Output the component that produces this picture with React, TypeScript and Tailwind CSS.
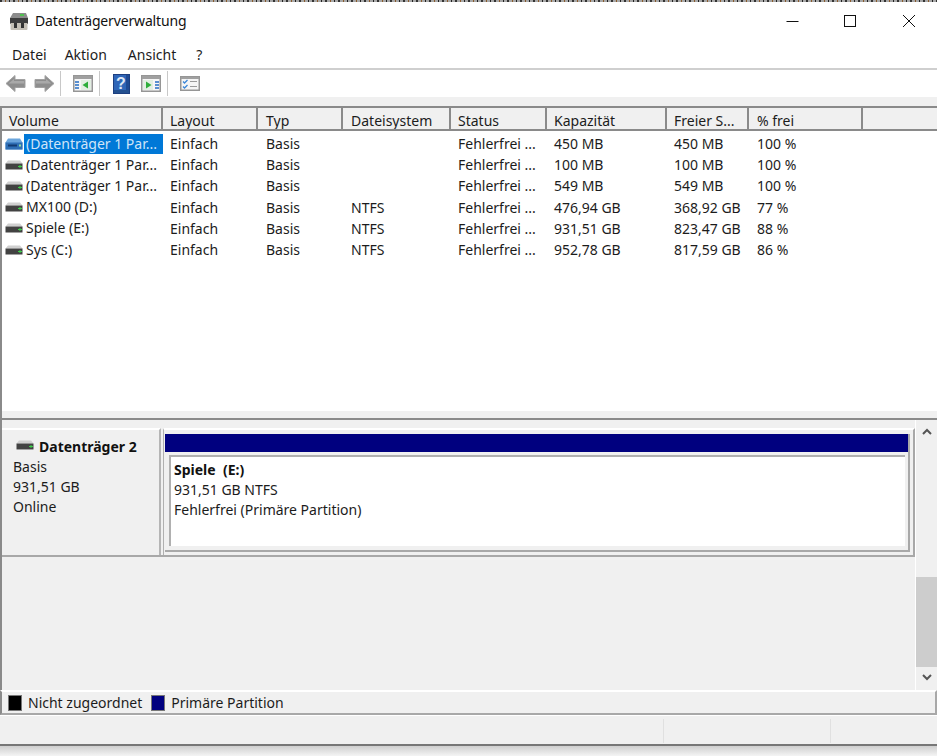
import React from "react";

const FONT = "font-['Noto_Sans','Open_Sans',sans-serif]";

const columns = [
  { label: "Volume", w: "w-[161px]", pad: "pl-[7px]" },
  { label: "Layout", w: "w-[95px]", pad: "pl-[7px]" },
  { label: "Typ", w: "w-[85px]", pad: "pl-[8px]" },
  { label: "Dateisystem", w: "w-[108px]", pad: "pl-[8px]" },
  { label: "Status", w: "w-[96px]", pad: "pl-[7px]" },
  { label: "Kapazität", w: "w-[120px]", pad: "pl-[7px]" },
  { label: "Freier S...", w: "w-[82px]", pad: "pl-[7px]" },
  { label: "% frei", w: "w-[114px]", pad: "pl-[8px]" },
];

const rows = [
  ["(Datenträger 1 Par...", "Einfach", "Basis", "", "Fehlerfrei ...", "450 MB", "450 MB", "100 %"],
  ["(Datenträger 1 Par...", "Einfach", "Basis", "", "Fehlerfrei ...", "100 MB", "100 MB", "100 %"],
  ["(Datenträger 1 Par...", "Einfach", "Basis", "", "Fehlerfrei ...", "549 MB", "549 MB", "100 %"],
  ["MX100 (D:)", "Einfach", "Basis", "NTFS", "Fehlerfrei ...", "476,94 GB", "368,92 GB", "77 %"],
  ["Spiele (E:)", "Einfach", "Basis", "NTFS", "Fehlerfrei ...", "931,51 GB", "823,47 GB", "88 %"],
  ["Sys (C:)", "Einfach", "Basis", "NTFS", "Fehlerfrei ...", "952,78 GB", "817,59 GB", "86 %"],
];

function DiskIcon({ selected = false }: { selected?: boolean }) {
  if (selected) {
    return (
      <svg width="18" height="12" viewBox="0 0 18 12" className="shrink-0">
        <path d="M3 0.5h12l2.5 4v7H0.5v-7z" fill="#6aa5dc" />
        <rect x="0.5" y="4.5" width="17" height="7" fill="#2f6fb5" />
        <rect x="3" y="6.5" width="9" height="2" fill="#123a70" />
        <rect x="14" y="6.5" width="2" height="2" fill="#8fe0a0" />
      </svg>
    );
  }
  return (
    <svg width="18" height="12" viewBox="0 0 18 12" className="shrink-0">
      <path d="M3 1.5h12l2.5 3H0.5z" fill="#d0d0d0" />
      <rect x="0.5" y="4.5" width="17" height="5.5" fill="#424242" />
      <rect x="0.5" y="10" width="17" height="1" fill="#a0a0a0" />
      <rect x="13" y="7" width="4" height="1" fill="#3ed04a" />
      <rect x="14.5" y="6" width="1" height="3" fill="#3ed04a" />
    </svg>
  );
}

function AppIcon() {
  return (
    <svg width="20" height="20" viewBox="0 0 20 20" className="shrink-0">
      <path d="M4 2h13l2 5H1z" fill="#8c8c8c" />
      <rect x="11" y="3" width="4" height="2" fill="#4fc04f" />
      <path d="M1 7h18v6H1z" fill="#3d3d3d" />
      <path d="M1.5 12h17v6a1 1 0 0 1-1 1h-15a1 1 0 0 1-1-1z" fill="#c4bfb5" />
      <rect x="5" y="12" width="3" height="5" fill="#333" />
      <rect x="12" y="12" width="3" height="5" fill="#333" />
    </svg>
  );
}

function Arrow({ flip = false }: { flip?: boolean }) {
  return (
    <svg width="21" height="19" viewBox="0 0 21 19" className={flip ? "-scale-x-100" : ""}>
      <path d="M1 9.5 L10 1.5 V5.5 H20 V13.5 H10 V17.5 Z" fill="#8e8e8e" stroke="#a2a2a2" strokeWidth="1" />
      <path d="M3.5 9.5 L9 5 V7 H19 V9.5 Z" fill="#a9a9a9" />
    </svg>
  );
}

function PaneIcon({ right = false }: { right?: boolean }) {
  return (
    <svg width="20" height="17" viewBox="0 0 20 17">
      <rect x="0.75" y="0.75" width="18.5" height="15.5" fill="#f6f6f6" stroke="#969696" strokeWidth="1.5" />
      <rect x="1" y="1" width="18" height="3" fill="#a0a0a0" />
      {right ? (
        <>
          <rect x="2" y="5" width="10" height="10" fill="#e2efe2" />
          <path d="M5 6.5 L10.5 10 L5 13.5 Z" fill="#2dae3a" />
          <rect x="14" y="6" width="4" height="2" fill="#5a8fd0" />
          <rect x="14" y="9" width="4" height="2" fill="#5a8fd0" />
          <rect x="14" y="12" width="4" height="2" fill="#5a8fd0" />
        </>
      ) : (
        <>
          <rect x="2" y="6" width="4" height="2" fill="#5a8fd0" />
          <rect x="2" y="9" width="4" height="2" fill="#5a8fd0" />
          <rect x="2" y="12" width="4" height="2" fill="#5a8fd0" />
          <rect x="8" y="5" width="10" height="10" fill="#e2efe2" />
          <path d="M15 6.5 L9.5 10 L15 13.5 Z" fill="#2dae3a" />
        </>
      )}
    </svg>
  );
}

function HelpIcon() {
  return (
    <svg width="17" height="20" viewBox="0 0 17 20">
      <rect x="0.5" y="0.5" width="16" height="19" fill="#2f66b8" stroke="#1d3f80" />
      <rect x="13" y="1" width="3" height="18" fill="#1f4a94" />
      <rect x="1" y="16" width="15" height="3" fill="#24508f" />
      <text x="8" y="15" textAnchor="middle" fontSize="16" fontWeight="700" fontFamily="Liberation Sans" fill="#dfe8f6">?</text>
    </svg>
  );
}

function CheckIcon() {
  return (
    <svg width="20" height="15" viewBox="0 0 20 15">
      <rect x="0.75" y="0.75" width="18.5" height="13.5" fill="#f5f5f5" stroke="#969696" strokeWidth="1.5" />
      <rect x="1" y="1" width="18" height="2" fill="#a0a0a0" />
      <path d="M3 5.5l1.5 1.5L7.5 4M3 10.5l1.5 1.5 3-3" fill="none" stroke="#3a86d8" strokeWidth="1.3" />
      <rect x="10" y="5" width="7" height="1" fill="#9a9a9a" />
      <rect x="10" y="10" width="7" height="1" fill="#9a9a9a" />
    </svg>
  );
}

function Sep() {
  return <div className="w-px h-[25px] bg-[#c8c8c8]" />;
}

export default function App() {
  return (
    <div className={`${FONT} w-[937px] h-[756px] overflow-hidden flex flex-col bg-[#f0f0f0] text-[14px] text-[#1c1c1c]`}>
      {/* sliver of the page behind the window */}
      <div className="h-[2px] shrink-0 bg-[repeating-linear-gradient(90deg,#333_0,#333_2px,#a8a8a8_2px,#a8a8a8_5px,#8a5a2a_5px,#8a5a2a_6px,#a8a8a8_6px,#a8a8a8_9px,#222_9px,#222_10px,#a8a8a8_10px,#a8a8a8_13px)]" />

      {/* title bar */}
      <div className="h-[40px] shrink-0 bg-white flex items-center">
        <div className="ml-[9px] mr-[6px] mb-[3px]"><AppIcon /></div>
        <span className="text-[14px] tracking-[-0.15px] mb-[3px] text-[#111]">Datenträgerverwaltung</span>
        <div className="ml-auto flex items-center mb-[3px]">
          <svg width="14" height="14" viewBox="0 0 14 14" className="mr-[44px]"><path d="M1.5 7.5h12" stroke="#111" strokeWidth="1" /></svg>
          <svg width="14" height="14" viewBox="0 0 14 14" className="mr-[45px]"><rect x="1.5" y="1.5" width="11" height="11" fill="none" stroke="#111" /></svg>
          <svg width="14" height="14" viewBox="0 0 14 14" className="mr-[21px]"><path d="M1 1l12 12M13 1L1 13" stroke="#111" strokeWidth="1" /></svg>
        </div>
      </div>

      {/* menu */}
      <div className="h-[26px] shrink-0 bg-white flex items-center pl-[12px] pb-[1px]">
        <span>Datei</span>
        <span className="ml-[18px]">Aktion</span>
        <span className="ml-[21px]">Ansicht</span>
        <span className="ml-[20px]">?</span>
      </div>

      {/* toolbar */}
      <div className="h-[29px] shrink-0 bg-white border-t-2 border-[#cfcfcf] flex items-center pl-[5px]">
        <Arrow />
        <div className="ml-[8px]"><Arrow flip /></div>
        <div className="ml-[5px]"><Sep /></div>
        <div className="ml-[12px]"><PaneIcon /></div>
        <div className="ml-[6px]"><Sep /></div>
        <div className="ml-[13px]"><HelpIcon /></div>
        <div className="ml-[11px]"><PaneIcon right /></div>
        <div className="ml-[6px]"><Sep /></div>
        <div className="ml-[12px]"><CheckIcon /></div>
      </div>

      <div className="h-[9px] shrink-0 bg-[#f0f0f0]" />

      {/* volume list */}
      <div className="h-[312px] shrink-0 bg-white border-l-2 border-[#8a8a8a] flex flex-col">
        <div className="h-[25px] shrink-0 flex bg-[#f0f0f0] border-t-2 border-b-2 border-[#8a8a8a]">
          {columns.map((c) => (
            <div key={c.label} className={`${c.w} ${c.pad} shrink-0 border-r-2 border-[#8a8a8a] pt-[2px] leading-[21px] overflow-hidden whitespace-nowrap`}>
              {c.label}
            </div>
          ))}
          <div className="flex-1" />
        </div>
        <div className="flex-1 pt-[2px]">
          {rows.map((r, i) => (
            <div key={i} className="h-[21.2px] flex items-center whitespace-nowrap">
              {r.map((cell, j) => (
                <div key={j} className={`${columns[j].w} shrink-0 ${j === 0 ? "pl-[3px] flex items-center" : columns[j].pad}`}>
                  {j === 0 ? (
                    <>
                      <DiskIcon selected={i === 0} />
                      <span className={`ml-[1px] pl-[2px] flex-1 leading-[20px] ${i === 0 ? "bg-[#0078d7] text-[#cfe4f7]" : ""}`}>{cell}</span>
                    </>
                  ) : (
                    cell
                  )}
                </div>
              ))}
            </div>
          ))}
        </div>
        <div className="h-[7px] shrink-0 bg-[#f0f0f0]" />
      </div>

      {/* splitter */}
      <div className="h-[2px] shrink-0 bg-[#8a8a8a]" />

      {/* graphical pane */}
      <div className="h-[270px] shrink-0 flex border-l-2 border-[#8a8a8a]">
        <div className="flex-1 min-w-0">
          <div className="mt-[8px] h-[129px] flex border-b-2 border-[#a8a8a8]">
            <div className="w-[159px] shrink-0 border-t-2 border-white border-r-2 border-r-[#b5b5b5] pl-[11px] pt-[7px] leading-[20px]">
              <div className="flex items-center h-[20px]">
                <div className="-mt-[4px] ml-[3px]"><DiskIcon /></div>
                <span className="ml-[5px] font-bold text-[#111]">Datenträger 2</span>
              </div>
              <div>Basis</div>
              <div>931,51 GB</div>
              <div>Online</div>
            </div>
            <div className="flex-1 ml-[2px] border-t-2 border-t-white border-l border-l-[#b0b0b0] border-r-2 border-r-[#a8a8a8] pl-[1px] pr-[3px] pt-[4px] pb-[3px] flex">
              <div className="flex-1 flex flex-col border-r-2 border-b-2 border-[#a8a8a8]">
                <div className="h-[18px] shrink-0 bg-[#00007f]" />
                <div className="mt-[3px] ml-[4px] mr-[3px] mb-[4px] flex-1 bg-white border-t-2 border-l-2 border-[#b0b0b0] pl-[3px] pt-[3px] leading-[20px]">
                  <div className="font-bold text-[#111]">Spiele&nbsp; (E:)</div>
                  <div>931,51 GB NTFS</div>
                  <div>Fehlerfrei (Primäre Partition)</div>
                </div>
              </div>
            </div>
          </div>
        </div>
        <div className="w-[22px] shrink-0 border-l border-white flex flex-col items-center pt-[8px]">
          <svg width="10" height="7" viewBox="0 0 10 7"><path d="M1 6l4-4 4 4" fill="none" stroke="#555" strokeWidth="2" /></svg>
          <div className="mt-[142px] w-full h-[90px] bg-[#cdcdcd]" />
          <svg width="10" height="7" viewBox="0 0 10 7" className="mt-[7px]"><path d="M1 1l4 4 4-4" fill="none" stroke="#555" strokeWidth="2" /></svg>
        </div>
      </div>

      {/* legend */}
      <div className="h-[25px] shrink-0 border-t-2 border-white border-l-2 border-l-[#8a8a8a] border-b-2 border-b-[#a8a8a8] border-r-2 border-r-[#a8a8a8] flex items-center pl-[6px]">
        <div className="w-[14px] h-[16px] bg-black border border-[#777]" />
        <span className="ml-[6px]">Nicht zugeordnet</span>
        <div className="ml-[9px] w-[14px] h-[16px] bg-[#00007f] border border-[#777]" />
        <span className="ml-[6px]">Primäre Partition</span>
      </div>

      {/* status bar */}
      <div className="h-[1px] shrink-0 bg-white" />
      <div className="h-[30px] shrink-0 flex justify-end border-b-2 border-[#777] pt-[3px] pb-[1px]">
        <div className="w-[167px] border-l border-[#e0e0e0]" />
        <div className="w-[107px] border-l border-[#e0e0e0]" />
      </div>
      <div className="flex-1 bg-gradient-to-b from-[#cfcfcf] to-[#f4f4f4]" />
    </div>
  );
}
